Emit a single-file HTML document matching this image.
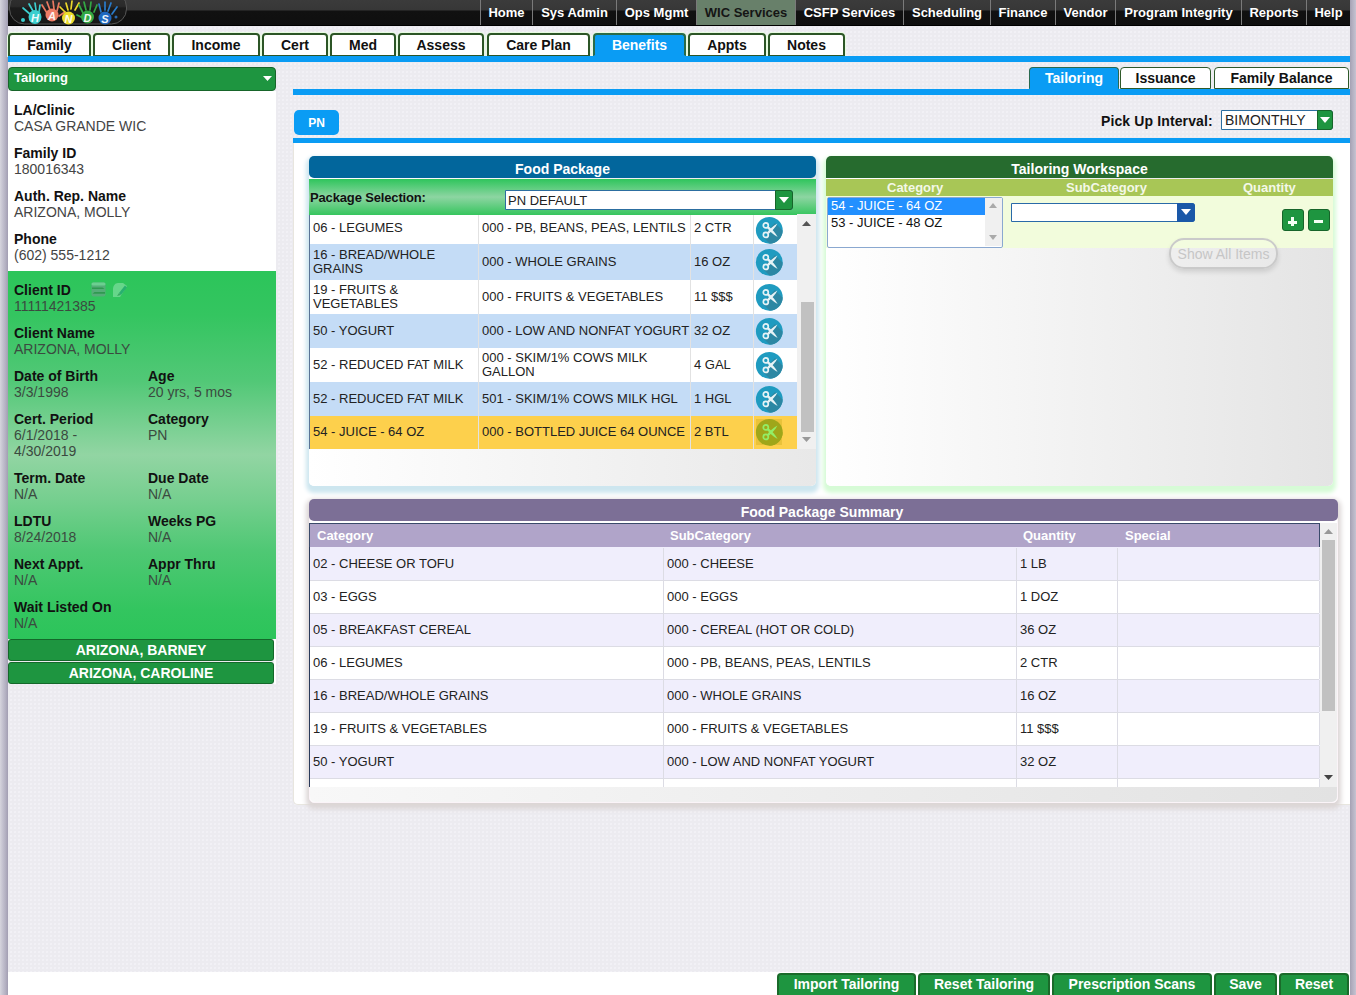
<!DOCTYPE html><html><head><meta charset="utf-8"><style>
*{box-sizing:border-box;margin:0;padding:0}
html,body{width:1356px;height:995px;overflow:hidden}
body{position:relative;font-family:"Liberation Sans",sans-serif;background:#ecebf0;
background-image:radial-gradient(circle,#f1f0f5 0.7px,transparent 1.2px);background-size:4px 4px;background-position:1px 2px;color:#222}
.a{position:absolute}
#gl{left:0;top:0;width:8px;height:995px;background:linear-gradient(90deg,#d6d5dd 0%,#c6c4d1 30%,#b3b0c1 70%,#a29eb2 100%)}
#gr{left:1350px;top:0;width:6px;height:995px;background:linear-gradient(90deg,#a4a1b3 0%,#b1aebf 35%,#c5c3d1 100%)}
#hdr{left:8px;top:0;width:1342px;height:26px;background:linear-gradient(#3b3b3b 0,#373737 10px,#111 11px,#0f0f0f 25px,#000 25px);}
.nv{position:absolute;top:0;height:25px;line-height:25px;font-size:13px;font-weight:bold;color:#fff;text-align:center;border-left:1px solid #7a7a7a}
.nv.sel{background:#68806a;color:#151515}
.tab{position:absolute;top:33px;height:23px;border:2px solid #2c5526;border-bottom:1px solid #2c5526;border-radius:4px 4px 0 0;box-shadow:0 0 0 1px #e6fbe0;background:#fff;font-size:14px;font-weight:bold;color:#111;text-align:center;line-height:21px}
.tab.sel{background:#0a9cf4;color:#fff;border-color:#2a6a48;border-bottom-color:#0a9cf4}
.bl{background:#0a9cf4}
.stab{position:absolute;top:67px;height:22px;border:1px solid #2f5a2a;border-bottom:1px solid #2f5a2a;border-radius:4px 4px 0 0;background:#fff;font-size:14px;font-weight:bold;color:#111;text-align:center;line-height:20px}
.stab.sel{background:#0a9cf4;color:#fff;border-color:#2a6a50;border-bottom-color:#0a9cf4}
.lb{position:absolute;font-size:14px;font-weight:bold;color:#111;line-height:16px;white-space:nowrap}
.vl{position:absolute;font-size:14px;color:#444;line-height:16px;white-space:nowrap}
.g .vl{color:#3a4a40}
.cbtn{position:absolute;left:8px;width:266px;height:22px;background:#1e9540;border:1px solid #14682a;border-radius:3px;color:#fff;font-size:14px;font-weight:bold;text-align:center;line-height:20px}
.fr{position:absolute;left:309px;width:488px;font-size:13px;color:#222;border-left:1px solid #5a7496}
.fr div{position:absolute;top:0;height:100%;display:flex;align-items:center;line-height:14px}
.sr{position:absolute;left:309px;width:1010px;height:33px;font-size:13px;color:#222;border-left:1px solid #2a3a5a;border-bottom:1px solid #dcdce4}
.sr div{position:absolute;top:0;height:32px;line-height:31px;padding-left:3px;border-right:1px solid #dcdce4}
.bb{position:absolute;top:973px;height:24px;background:#1e9540;border:2px solid #1a6a2a;border-bottom:none;border-radius:4px 4px 0 0;color:#fff;font-size:14px;font-weight:bold;text-align:center;line-height:19px}
</style></head><body>
<div id="gl" class="a"></div><div id="gr" class="a"></div>
<div id="hdr" class="a">
<svg class="a" style="left:1px;top:0" width="120" height="26" viewBox="0 0 120 26">
<defs><linearGradient id="lg" x1="0" y1="0" x2="0" y2="1"><stop offset="0" stop-color="#333"/><stop offset="0.45" stop-color="#2a2a2a"/><stop offset="0.5" stop-color="#1c1c1c"/><stop offset="1" stop-color="#161616"/></linearGradient></defs>
<rect x="0.5" y="-8" width="117" height="32" rx="15" fill="url(#lg)" stroke="#575757" stroke-width="1"/>
<g stroke-linecap="round" fill="none" stroke-width="1.7">
<g stroke="#3ccfcf"><path d="M22 15L14 8M24 11L20 4M27 10L26 3M30 12L31 5"/></g>
<g stroke="#ec7a62"><path d="M38 13L33 5M41 10L38 2M45 9L44 1M48 11L50 3M50 16L56 12"/></g>
<g stroke="#ecd82a"><path d="M56 12L51 7M59 10L57 3M62 9L63 1M66 10L70 3"/></g>
<g stroke="#33a844"><path d="M74 13L70 5M77 10L75 2M81 10L82 2M85 12L88 5M72 17L68 15"/></g>
<g stroke="#2a7ccc"><path d="M92 12L90 4M96 10L96 2M99 11L102 3M103 14L108 7"/></g>
</g>
<circle cx="14" cy="20" r="2" fill="#3ccfcf"/>
<circle cx="107" cy="17" r="1.5" fill="#2a6ab0"/>
<ellipse cx="26" cy="17" rx="6.5" ry="7" fill="#3ccfcf"/>
<ellipse cx="43" cy="15" rx="6.5" ry="6.5" fill="#ee7d66"/>
<ellipse cx="59.5" cy="18" rx="6.5" ry="6.5" fill="#ecdc2a"/>
<ellipse cx="78.5" cy="17" rx="6.5" ry="6.5" fill="#33a844"/>
<ellipse cx="96" cy="18" rx="6.5" ry="6.5" fill="#1e68c0"/>
<g fill="#fff" font-family="Liberation Sans" font-weight="bold" font-style="italic" font-size="11" text-anchor="middle" opacity="0.92">
<text x="26" y="22">H</text><text x="43" y="20">A</text><text x="59.5" y="23">N</text><text x="78.5" y="22">D</text><text x="96" y="23">S</text>
</g>
</svg>
<div class="nv" style="left:472px;width:52px">Home</div>
<div class="nv" style="left:524px;width:84px">Sys Admin</div>
<div class="nv" style="left:608px;width:80px">Ops Mgmt</div>
<div class="nv sel" style="left:688px;width:99px">WIC Services</div>
<div class="nv" style="left:787px;width:108px">CSFP Services</div>
<div class="nv" style="left:895px;width:87px">Scheduling</div>
<div class="nv" style="left:982px;width:65px">Finance</div>
<div class="nv" style="left:1047px;width:60px">Vendor</div>
<div class="nv" style="left:1107px;width:126px">Program Integrity</div>
<div class="nv" style="left:1233px;width:65px">Reports</div>
<div class="nv" style="left:1298px;width:44px">Help</div>
</div>
<div class="tab" style="left:8px;width:83px">Family</div>
<div class="tab" style="left:93px;width:77px">Client</div>
<div class="tab" style="left:172px;width:88px">Income</div>
<div class="tab" style="left:262px;width:66px">Cert</div>
<div class="tab" style="left:330px;width:66px">Med</div>
<div class="tab" style="left:398px;width:86px">Assess</div>
<div class="tab" style="left:487px;width:103px">Care Plan</div>
<div class="tab sel" style="left:593px;width:93px">Benefits</div>
<div class="tab" style="left:688px;width:78px">Appts</div>
<div class="tab" style="left:768px;width:77px">Notes</div>
<div class="a bl" style="left:8px;top:56px;width:1342px;height:6px"></div>
<div class="a" style="left:8px;top:67px;width:268px;height:24px;background:#1e9540;border:1px solid #17652a;border-radius:4px;"></div>
<div class="a" style="left:14px;top:67px;height:22px;line-height:22px;font-size:13px;font-weight:bold;color:#fff">Tailoring</div>
<svg class="a" style="left:263px;top:76px" width="9" height="5"><path d="M0 0H9L4.5 5Z" fill="#fff"/></svg>
<div class="a" style="left:8px;top:91px;width:268px;height:180px;background:#fff"></div>
<div class="a g" style="left:8px;top:271px;width:268px;height:368px;background:linear-gradient(#2cc55a 0%,#34c560 12%,#52c877 30%,#92d5a3 50%,#76cf8f 62%,#4fc874 76%,#33c55f 92%,#2cc45a 100%)"></div>
<div class="a" style="left:274px;top:639px;width:2px;height:45px;background:#fff"></div>
<div class="lb" style="left:14px;top:102px">LA/Clinic</div>
<div class="vl" style="left:14px;top:118px;">CASA GRANDE WIC</div>
<div class="lb" style="left:14px;top:145px">Family ID</div>
<div class="vl" style="left:14px;top:161px;">180016343</div>
<div class="lb" style="left:14px;top:188px">Auth. Rep. Name</div>
<div class="vl" style="left:14px;top:204px;">ARIZONA, MOLLY</div>
<div class="lb" style="left:14px;top:231px">Phone</div>
<div class="vl" style="left:14px;top:247px;">(602) 555-1212</div>
<div class="lb" style="left:14px;top:282px">Client ID</div>
<div class="vl" style="left:14px;top:298px;color:#3b4a40;">11111421385</div>
<div class="lb" style="left:14px;top:325px">Client Name</div>
<div class="vl" style="left:14px;top:341px;color:#3b4a40;">ARIZONA, MOLLY</div>
<div class="lb" style="left:14px;top:368px">Date of Birth</div>
<div class="vl" style="left:14px;top:384px;color:#3b4a40;">3/3/1998</div>
<div class="lb" style="left:148px;top:368px">Age</div>
<div class="vl" style="left:148px;top:384px;color:#3b4a40;">20 yrs, 5 mos</div>
<div class="lb" style="left:14px;top:411px">Cert. Period</div>
<div class="vl" style="left:14px;top:427px;color:#3b4a40;">6/1/2018 -</div>
<div class="vl" style="left:14px;top:443px;color:#3b4a40;">4/30/2019</div>
<div class="lb" style="left:148px;top:411px">Category</div>
<div class="vl" style="left:148px;top:427px;color:#3b4a40;">PN</div>
<div class="lb" style="left:14px;top:470px">Term. Date</div>
<div class="vl" style="left:14px;top:486px;color:#3b4a40;">N/A</div>
<div class="lb" style="left:148px;top:470px">Due Date</div>
<div class="vl" style="left:148px;top:486px;color:#3b4a40;">N/A</div>
<div class="lb" style="left:14px;top:513px">LDTU</div>
<div class="vl" style="left:14px;top:529px;color:#3b4a40;">8/24/2018</div>
<div class="lb" style="left:148px;top:513px">Weeks PG</div>
<div class="vl" style="left:148px;top:529px;color:#3b4a40;">N/A</div>
<div class="lb" style="left:14px;top:556px">Next Appt.</div>
<div class="vl" style="left:14px;top:572px;color:#3b4a40;">N/A</div>
<div class="lb" style="left:148px;top:556px">Appr Thru</div>
<div class="vl" style="left:148px;top:572px;color:#3b4a40;">N/A</div>
<div class="lb" style="left:14px;top:599px">Wait Listed On</div>
<div class="vl" style="left:14px;top:615px;color:#3b4a40;">N/A</div>
<svg class="a" style="left:91px;top:282px" width="15" height="15" viewBox="0 0 15 15">
<rect x="0.5" y="0.5" width="14" height="14" rx="2" fill="#55ad78"/>
<rect x="0.5" y="0.5" width="14" height="3" rx="1.5" fill="#6ccf90"/>
<path d="M1 5.5H11.5L13.5 7H1Z" fill="#2f9a50"/>
<path d="M14 10H3.5L1.5 11.8H14Z" fill="#2f9a50"/>
</svg>
<svg class="a" style="left:113px;top:283px" width="14" height="14" viewBox="0 0 14 14">
<path d="M0 14V6C0 3 2 0 5 0H10L14 3L9 11L7 14Z" fill="#66d68a"/>
<path d="M6 10L12 2.5L13.8 4.5L8 12Z" fill="#28b070"/>
<path d="M4 13L6 10L8 12Z" fill="#3aa860"/>
</svg>
<div class="cbtn" style="top:639px;line-height:21px">ARIZONA, BARNEY</div>
<div class="cbtn" style="top:662px">ARIZONA, CAROLINE</div>
<div class="stab sel" style="left:1029px;width:90px">Tailoring</div>
<div class="stab" style="left:1120px;width:91px">Issuance</div>
<div class="stab" style="left:1214px;width:135px">Family Balance</div>
<div class="a bl" style="left:293px;top:89px;width:1057px;height:6px"></div>
<div class="a" style="left:294px;top:110px;width:45px;height:25px;background:#0a9cf4;border-radius:5px;color:#fff;font-size:12px;font-weight:bold;text-align:center;line-height:27px">PN</div>
<div class="a" style="left:1101px;top:113px;font-size:14px;font-weight:bold;color:#111;line-height:16px;letter-spacing:.12px">Pick Up Interval:</div>
<div class="a" style="left:1221px;top:110px;width:112px;height:20px;background:#fff;border:1px solid #2c6ea0;border-radius:0 3px 3px 0"></div>
<div class="a" style="left:1225px;top:112px;font-size:14px;color:#222;line-height:16px">BIMONTHLY</div>
<div class="a" style="left:1317px;top:110px;width:16px;height:20px;background:#1e9540;border:1px solid #17652a;border-radius:0 3px 3px 0"></div>
<svg class="a" style="left:1320px;top:117px" width="10" height="6"><path d="M0 0H10L5 6Z" fill="#fff"/></svg>
<div class="a bl" style="left:293px;top:138px;width:1057px;height:5px"></div>
<div class="a" style="left:293px;top:143px;width:1057px;height:662px;background:#fff;border:1px solid #e8e6df;border-top:none;border-right:none;border-radius:0 0 0 5px"></div>
<div class="a" style="left:309px;top:156px;width:507px;height:330px;background:linear-gradient(90deg,#fff,#e8e8e8);border-radius:5px;box-shadow:0 4px 4px 3px #cde6ef"></div>
<div class="a" style="left:309px;top:156px;width:507px;height:22px;background:#02669c;border-radius:5px;color:#fff;font-size:14px;font-weight:bold;text-align:center;line-height:26px">Food Package</div>
<div class="a" style="left:309px;top:179px;width:507px;height:36px;background:linear-gradient(#2fc55c 0%,#8dd5a2 50%,#36c55e 100%)"></div>
<div class="a" style="left:310px;top:190px;font-size:13px;font-weight:bold;color:#111;line-height:16px;letter-spacing:-.15px">Package Selection:</div>
<div class="a" style="left:505px;top:190px;width:288px;height:20px;background:#fff;border:1px solid #2c6ea0;border-radius:0 3px 3px 0"></div>
<div class="a" style="left:508px;top:193px;font-size:13px;color:#222;line-height:16px">PN DEFAULT</div>
<div class="a" style="left:775px;top:190px;width:18px;height:20px;background:#1e9540;border:1px solid #17652a;border-radius:0 3px 3px 0"></div>
<svg class="a" style="left:779px;top:197px" width="10" height="6"><path d="M0 0H10L5 6Z" fill="#fff"/></svg>
<div class="a" style="left:309px;top:215px;width:507px;height:234px;background:#fff"></div>
<div class="fr" style="top:215px;height:29px;background:#fff"><div style="left:3px;width:165px;padding-bottom:3px;">06 - LEGUMES</div><div style="left:168px;width:212px;border-left:1px solid #e2e2e2;padding-left:3px;white-space:nowrap;padding-bottom:3px;">000 - PB, BEANS, PEAS, LENTILS</div><div style="left:380px;width:63px;border-left:1px solid #e2e2e2;padding-left:3px;padding-bottom:3px;">2 CTR</div><div style="left:443px;width:45px;border-left:1px solid #e2e2e2"></div></div>
<svg class="a" style="left:755px;top:216px" width="28" height="28" viewBox="0 0 28 28">
<defs><clipPath id="c230"><circle cx="14.3" cy="14.3" r="13.4"/></clipPath></defs>
<circle cx="14.3" cy="14.3" r="13.4" fill="#1f9bc0"/>
<path d="M7 20 L20 7 L40 27 L27 40 Z" fill="#2d85a0" clip-path="url(#c230)" opacity="0.9"/>
<circle cx="10.8" cy="9.4" r="2.5" fill="#1f9bc0" stroke="#e6f3f6" stroke-width="1.7"/>
<circle cx="10.8" cy="18.9" r="2.5" fill="#1f9bc0" stroke="#e6f3f6" stroke-width="1.7"/>
<path d="M12 16.6 C14.6 13.2 18 9.8 22.4 7.5 C20.6 11.2 17.6 14.6 13.8 17.8 Z" fill="#e6f3f6"/>
<path d="M12 11.7 C14.6 15.1 18 18.6 22.6 21 C20.6 17.2 17.6 13.8 13.8 10.5 Z" fill="#e6f3f6"/>
</svg>
<div class="fr" style="top:244px;height:36px;background:#c4dcf6"><div style="left:3px;width:165px;">16 - BREAD/WHOLE<br>GRAINS</div><div style="left:168px;width:212px;border-left:1px solid #e2e2e2;padding-left:3px;white-space:nowrap;">000 - WHOLE GRAINS</div><div style="left:380px;width:63px;border-left:1px solid #e2e2e2;padding-left:3px;">16 OZ</div><div style="left:443px;width:45px;border-left:1px solid #e2e2e2"></div></div>
<svg class="a" style="left:755px;top:248px" width="28" height="28" viewBox="0 0 28 28">
<defs><clipPath id="c262"><circle cx="14.3" cy="14.3" r="13.4"/></clipPath></defs>
<circle cx="14.3" cy="14.3" r="13.4" fill="#1f9bc0"/>
<path d="M7 20 L20 7 L40 27 L27 40 Z" fill="#2d85a0" clip-path="url(#c262)" opacity="0.9"/>
<circle cx="10.8" cy="9.4" r="2.5" fill="#1f9bc0" stroke="#e6f3f6" stroke-width="1.7"/>
<circle cx="10.8" cy="18.9" r="2.5" fill="#1f9bc0" stroke="#e6f3f6" stroke-width="1.7"/>
<path d="M12 16.6 C14.6 13.2 18 9.8 22.4 7.5 C20.6 11.2 17.6 14.6 13.8 17.8 Z" fill="#e6f3f6"/>
<path d="M12 11.7 C14.6 15.1 18 18.6 22.6 21 C20.6 17.2 17.6 13.8 13.8 10.5 Z" fill="#e6f3f6"/>
</svg>
<div class="fr" style="top:280px;height:34px;background:#fff"><div style="left:3px;width:165px;">19 - FRUITS &amp;<br>VEGETABLES</div><div style="left:168px;width:212px;border-left:1px solid #e2e2e2;padding-left:3px;white-space:nowrap;">000 - FRUITS &amp; VEGETABLES</div><div style="left:380px;width:63px;border-left:1px solid #e2e2e2;padding-left:3px;">11 $$$</div><div style="left:443px;width:45px;border-left:1px solid #e2e2e2"></div></div>
<svg class="a" style="left:755px;top:283px" width="28" height="28" viewBox="0 0 28 28">
<defs><clipPath id="c297"><circle cx="14.3" cy="14.3" r="13.4"/></clipPath></defs>
<circle cx="14.3" cy="14.3" r="13.4" fill="#1f9bc0"/>
<path d="M7 20 L20 7 L40 27 L27 40 Z" fill="#2d85a0" clip-path="url(#c297)" opacity="0.9"/>
<circle cx="10.8" cy="9.4" r="2.5" fill="#1f9bc0" stroke="#e6f3f6" stroke-width="1.7"/>
<circle cx="10.8" cy="18.9" r="2.5" fill="#1f9bc0" stroke="#e6f3f6" stroke-width="1.7"/>
<path d="M12 16.6 C14.6 13.2 18 9.8 22.4 7.5 C20.6 11.2 17.6 14.6 13.8 17.8 Z" fill="#e6f3f6"/>
<path d="M12 11.7 C14.6 15.1 18 18.6 22.6 21 C20.6 17.2 17.6 13.8 13.8 10.5 Z" fill="#e6f3f6"/>
</svg>
<div class="fr" style="top:314px;height:34px;background:#c4dcf6"><div style="left:3px;width:165px;">50 - YOGURT</div><div style="left:168px;width:212px;border-left:1px solid #e2e2e2;padding-left:3px;white-space:nowrap;">000 - LOW AND NONFAT YOGURT</div><div style="left:380px;width:63px;border-left:1px solid #e2e2e2;padding-left:3px;">32 OZ</div><div style="left:443px;width:45px;border-left:1px solid #e2e2e2"></div></div>
<svg class="a" style="left:755px;top:317px" width="28" height="28" viewBox="0 0 28 28">
<defs><clipPath id="c331"><circle cx="14.3" cy="14.3" r="13.4"/></clipPath></defs>
<circle cx="14.3" cy="14.3" r="13.4" fill="#1f9bc0"/>
<path d="M7 20 L20 7 L40 27 L27 40 Z" fill="#2d85a0" clip-path="url(#c331)" opacity="0.9"/>
<circle cx="10.8" cy="9.4" r="2.5" fill="#1f9bc0" stroke="#e6f3f6" stroke-width="1.7"/>
<circle cx="10.8" cy="18.9" r="2.5" fill="#1f9bc0" stroke="#e6f3f6" stroke-width="1.7"/>
<path d="M12 16.6 C14.6 13.2 18 9.8 22.4 7.5 C20.6 11.2 17.6 14.6 13.8 17.8 Z" fill="#e6f3f6"/>
<path d="M12 11.7 C14.6 15.1 18 18.6 22.6 21 C20.6 17.2 17.6 13.8 13.8 10.5 Z" fill="#e6f3f6"/>
</svg>
<div class="fr" style="top:348px;height:34px;background:#fff"><div style="left:3px;width:165px;">52 - REDUCED FAT MILK</div><div style="left:168px;width:212px;border-left:1px solid #e2e2e2;padding-left:3px;white-space:nowrap;">000 - SKIM/1% COWS MILK<br>GALLON</div><div style="left:380px;width:63px;border-left:1px solid #e2e2e2;padding-left:3px;">4 GAL</div><div style="left:443px;width:45px;border-left:1px solid #e2e2e2"></div></div>
<svg class="a" style="left:755px;top:351px" width="28" height="28" viewBox="0 0 28 28">
<defs><clipPath id="c365"><circle cx="14.3" cy="14.3" r="13.4"/></clipPath></defs>
<circle cx="14.3" cy="14.3" r="13.4" fill="#1f9bc0"/>
<path d="M7 20 L20 7 L40 27 L27 40 Z" fill="#2d85a0" clip-path="url(#c365)" opacity="0.9"/>
<circle cx="10.8" cy="9.4" r="2.5" fill="#1f9bc0" stroke="#e6f3f6" stroke-width="1.7"/>
<circle cx="10.8" cy="18.9" r="2.5" fill="#1f9bc0" stroke="#e6f3f6" stroke-width="1.7"/>
<path d="M12 16.6 C14.6 13.2 18 9.8 22.4 7.5 C20.6 11.2 17.6 14.6 13.8 17.8 Z" fill="#e6f3f6"/>
<path d="M12 11.7 C14.6 15.1 18 18.6 22.6 21 C20.6 17.2 17.6 13.8 13.8 10.5 Z" fill="#e6f3f6"/>
</svg>
<div class="fr" style="top:382px;height:34px;background:#c4dcf6"><div style="left:3px;width:165px;">52 - REDUCED FAT MILK</div><div style="left:168px;width:212px;border-left:1px solid #e2e2e2;padding-left:3px;white-space:nowrap;">501 - SKIM/1% COWS MILK HGL</div><div style="left:380px;width:63px;border-left:1px solid #e2e2e2;padding-left:3px;">1 HGL</div><div style="left:443px;width:45px;border-left:1px solid #e2e2e2"></div></div>
<svg class="a" style="left:755px;top:385px" width="28" height="28" viewBox="0 0 28 28">
<defs><clipPath id="c399"><circle cx="14.3" cy="14.3" r="13.4"/></clipPath></defs>
<circle cx="14.3" cy="14.3" r="13.4" fill="#1f9bc0"/>
<path d="M7 20 L20 7 L40 27 L27 40 Z" fill="#2d85a0" clip-path="url(#c399)" opacity="0.9"/>
<circle cx="10.8" cy="9.4" r="2.5" fill="#1f9bc0" stroke="#e6f3f6" stroke-width="1.7"/>
<circle cx="10.8" cy="18.9" r="2.5" fill="#1f9bc0" stroke="#e6f3f6" stroke-width="1.7"/>
<path d="M12 16.6 C14.6 13.2 18 9.8 22.4 7.5 C20.6 11.2 17.6 14.6 13.8 17.8 Z" fill="#e6f3f6"/>
<path d="M12 11.7 C14.6 15.1 18 18.6 22.6 21 C20.6 17.2 17.6 13.8 13.8 10.5 Z" fill="#e6f3f6"/>
</svg>
<div class="fr" style="top:416px;height:33px;background:#fdd04c"><div style="left:3px;width:165px;padding-bottom:2px;">54 - JUICE - 64 OZ</div><div style="left:168px;width:212px;border-left:1px solid #e2e2e2;padding-left:3px;white-space:nowrap;padding-bottom:2px;">000 - BOTTLED JUICE 64 OUNCE</div><div style="left:380px;width:63px;border-left:1px solid #e2e2e2;padding-left:3px;padding-bottom:2px;">2 BTL</div><div style="left:443px;width:45px;border-left:1px solid #e2e2e2"></div></div>
<svg class="a" style="left:755px;top:418px" width="28" height="28" viewBox="0 0 28 28"><rect x="1" y="1" width="26" height="26" fill="#e9c23a"/>
<defs><clipPath id="c432"><circle cx="14.3" cy="14.3" r="13.4"/></clipPath></defs>
<circle cx="14.3" cy="14.3" r="13.4" fill="#9fa61a"/>
<path d="M7 20 L20 7 L40 27 L27 40 Z" fill="#9fa61a" clip-path="url(#c432)" opacity="0.9"/>
<circle cx="10.8" cy="9.4" r="2.5" fill="#9fa61a" stroke="#93ee66" stroke-width="1.7"/>
<circle cx="10.8" cy="18.9" r="2.5" fill="#9fa61a" stroke="#93ee66" stroke-width="1.7"/>
<path d="M12 16.6 C14.6 13.2 18 9.8 22.4 7.5 C20.6 11.2 17.6 14.6 13.8 17.8 Z" fill="#93ee66"/>
<path d="M12 11.7 C14.6 15.1 18 18.6 22.6 21 C20.6 17.2 17.6 13.8 13.8 10.5 Z" fill="#93ee66"/>
</svg>
<div class="a" style="left:797px;top:214px;width:19px;height:235px;background:#f0f0f0"></div>
<div class="a" style="left:801px;top:302px;width:13px;height:130px;background:#c1c1c1"></div>
<svg class="a" style="left:802px;top:221px" width="9" height="5"><path d="M0 5H9L4.5 0Z" fill="#555"/></svg>
<svg class="a" style="left:802px;top:437px" width="9" height="5"><path d="M0 0H9L4.5 5Z" fill="#999"/></svg>
<div class="a" style="left:826px;top:156px;width:507px;height:330px;background:linear-gradient(90deg,#fff,#e4e4e4);border-radius:5px;box-shadow:0 4px 4px 3px #d6fbd6"></div>
<div class="a" style="left:826px;top:156px;width:507px;height:22px;background:#266b2e;border-radius:5px 5px 0 0;color:#fff;font-size:14px;font-weight:bold;text-align:center;line-height:26px">Tailoring Workspace</div>
<div class="a" style="left:826px;top:179px;width:507px;height:17px;background:#a8c656"></div>
<div class="a" style="left:887px;top:180px;font-size:13px;font-weight:bold;color:#f4f8e8;line-height:16px">Category</div>
<div class="a" style="left:1066px;top:180px;font-size:13px;font-weight:bold;color:#f4f8e8;line-height:16px">SubCategory</div>
<div class="a" style="left:1243px;top:180px;font-size:13px;font-weight:bold;color:#f4f8e8;line-height:16px">Quantity</div>
<div class="a" style="left:826px;top:196px;width:507px;height:52px;background:#f2fcdc"></div>
<div class="a" style="left:827px;top:197px;width:176px;height:51px;background:#fff;border:1px solid #8aa8d0;border-radius:2px"></div>
<div class="a" style="left:985px;top:198px;width:17px;height:48px;background:#f0f0f0"></div>
<div class="a" style="left:828px;top:198px;width:157px;height:17px;background:#2290ff"></div>
<div class="a" style="left:831px;top:198px;font-size:13px;color:#fff;line-height:16px">54 - JUICE - 64 OZ</div>
<div class="a" style="left:831px;top:215px;font-size:13px;color:#111;line-height:16px">53 - JUICE - 48 OZ</div>
<svg class="a" style="left:989px;top:203px" width="8" height="5"><path d="M0 5H8L4 0Z" fill="#aaa"/></svg>
<svg class="a" style="left:989px;top:235px" width="8" height="5"><path d="M0 0H8L4 5Z" fill="#aaa"/></svg>
<div class="a" style="left:1011px;top:203px;width:184px;height:19px;background:#fff;border:1px solid #2a6aa8;border-radius:0 3px 3px 0"></div>
<div class="a" style="left:1177px;top:203px;width:18px;height:19px;background:#1a58a8;border-radius:0 3px 3px 0"></div>
<svg class="a" style="left:1181px;top:209px" width="10" height="6"><path d="M0 0H10L5 6Z" fill="#fff"/></svg>
<div class="a" style="left:1282px;top:209px;width:22px;height:22px;background:#1e9540;border:1px solid #17652a;border-radius:3px"></div>
<div class="a" style="left:1288px;top:221px;width:9px;height:2.5px;background:#f4fff4"></div>
<div class="a" style="left:1291.3px;top:217px;width:2.6px;height:9px;background:#f4fff4"></div>
<div class="a" style="left:1308px;top:209px;width:22px;height:22px;background:#1e9540;border:1px solid #17652a;border-radius:3px"></div>
<div class="a" style="left:1314px;top:220px;width:9px;height:2.8px;background:#f4fff4"></div>
<div class="a" style="left:1169px;top:238px;width:109px;height:31px;border:2px solid #cacaca;border-radius:15px;box-shadow:0 3px 5px rgba(0,0,0,.12);color:#c6c6c6;font-size:14px;text-align:center;line-height:28px;background:rgba(255,255,255,.1)">Show All Items</div>
<div class="a" style="left:309px;top:499px;width:1029px;height:304px;background:#fff;border:1px solid #fbf4f8;border-radius:5px;box-shadow:0 3px 5px 3px #dcd6d6"></div>
<div class="a" style="left:309px;top:499px;width:1029px;height:22px;background:#7c6f96;border-radius:5px;color:#fff;font-size:14px;font-weight:bold;text-align:center;line-height:26px;padding-right:3px">Food Package Summary</div>
<div class="a" style="left:309px;top:523px;width:1011px;height:24px;background:#b0a4c9;border:1px solid #3a4a6a;border-bottom:none"></div>
<div class="a" style="left:317px;top:528px;font-size:13px;font-weight:bold;color:#fff;line-height:16px">Category</div>
<div class="a" style="left:670px;top:528px;font-size:13px;font-weight:bold;color:#fff;line-height:16px">SubCategory</div>
<div class="a" style="left:1023px;top:528px;font-size:13px;font-weight:bold;color:#fff;line-height:16px">Quantity</div>
<div class="a" style="left:1125px;top:528px;font-size:13px;font-weight:bold;color:#fff;line-height:16px">Special</div>
<div class="a" style="left:309px;top:547px;width:1011px;height:240px;overflow:hidden;background:#f0eefc;border-left:1px solid #2a3a5a">
<div class="sr" style="left:-1px;top:1px;background:#f0eefc"><div style="left:0;width:354px">02 - CHEESE OR TOFU</div><div style="left:354px;width:353px">000 - CHEESE</div><div style="left:707px;width:101px">1 LB</div><div style="left:808px;width:202px"></div></div>
<div class="sr" style="left:-1px;top:34px;background:#fff"><div style="left:0;width:354px">03 - EGGS</div><div style="left:354px;width:353px">000 - EGGS</div><div style="left:707px;width:101px">1 DOZ</div><div style="left:808px;width:202px"></div></div>
<div class="sr" style="left:-1px;top:67px;background:#f0eefc"><div style="left:0;width:354px">05 - BREAKFAST CEREAL</div><div style="left:354px;width:353px">000 - CEREAL (HOT OR COLD)</div><div style="left:707px;width:101px">36 OZ</div><div style="left:808px;width:202px"></div></div>
<div class="sr" style="left:-1px;top:100px;background:#fff"><div style="left:0;width:354px">06 - LEGUMES</div><div style="left:354px;width:353px">000 - PB, BEANS, PEAS, LENTILS</div><div style="left:707px;width:101px">2 CTR</div><div style="left:808px;width:202px"></div></div>
<div class="sr" style="left:-1px;top:133px;background:#f0eefc"><div style="left:0;width:354px">16 - BREAD/WHOLE GRAINS</div><div style="left:354px;width:353px">000 - WHOLE GRAINS</div><div style="left:707px;width:101px">16 OZ</div><div style="left:808px;width:202px"></div></div>
<div class="sr" style="left:-1px;top:166px;background:#fff"><div style="left:0;width:354px">19 - FRUITS &amp; VEGETABLES</div><div style="left:354px;width:353px">000 - FRUITS &amp; VEGETABLES</div><div style="left:707px;width:101px">11 $$$</div><div style="left:808px;width:202px"></div></div>
<div class="sr" style="left:-1px;top:199px;background:#f0eefc"><div style="left:0;width:354px">50 - YOGURT</div><div style="left:354px;width:353px">000 - LOW AND NONFAT YOGURT</div><div style="left:707px;width:101px">32 OZ</div><div style="left:808px;width:202px"></div></div>
<div class="sr" style="left:-1px;top:232px;background:#fff"><div style="left:0;width:354px"></div><div style="left:354px;width:353px"></div><div style="left:707px;width:101px"></div><div style="left:808px;width:202px"></div></div>
</div>
<div class="a" style="left:310px;top:787px;width:1027px;height:15px;background:linear-gradient(90deg,#f8f8f8,#e2e2e2);border-radius:0 0 5px 5px"></div>
<div class="a" style="left:1320px;top:523px;width:17px;height:264px;background:#f0f0f0"></div>
<div class="a" style="left:1322px;top:540px;width:13px;height:171px;background:#c1c1c1"></div>
<svg class="a" style="left:1324px;top:529px" width="9" height="5"><path d="M0 5H9L4.5 0Z" fill="#999"/></svg>
<svg class="a" style="left:1324px;top:775px" width="9" height="5"><path d="M0 0H9L4.5 5Z" fill="#444"/></svg>
<div class="a" style="left:8px;top:972px;width:1342px;height:23px;background:#fff"></div>
<div class="bb" style="left:777px;width:139px">Import Tailoring</div>
<div class="bb" style="left:918px;width:132px">Reset Tailoring</div>
<div class="bb" style="left:1052px;width:160px">Prescription Scans</div>
<div class="bb" style="left:1214px;width:63px">Save</div>
<div class="bb" style="left:1279px;width:70px">Reset</div>
</body></html>
